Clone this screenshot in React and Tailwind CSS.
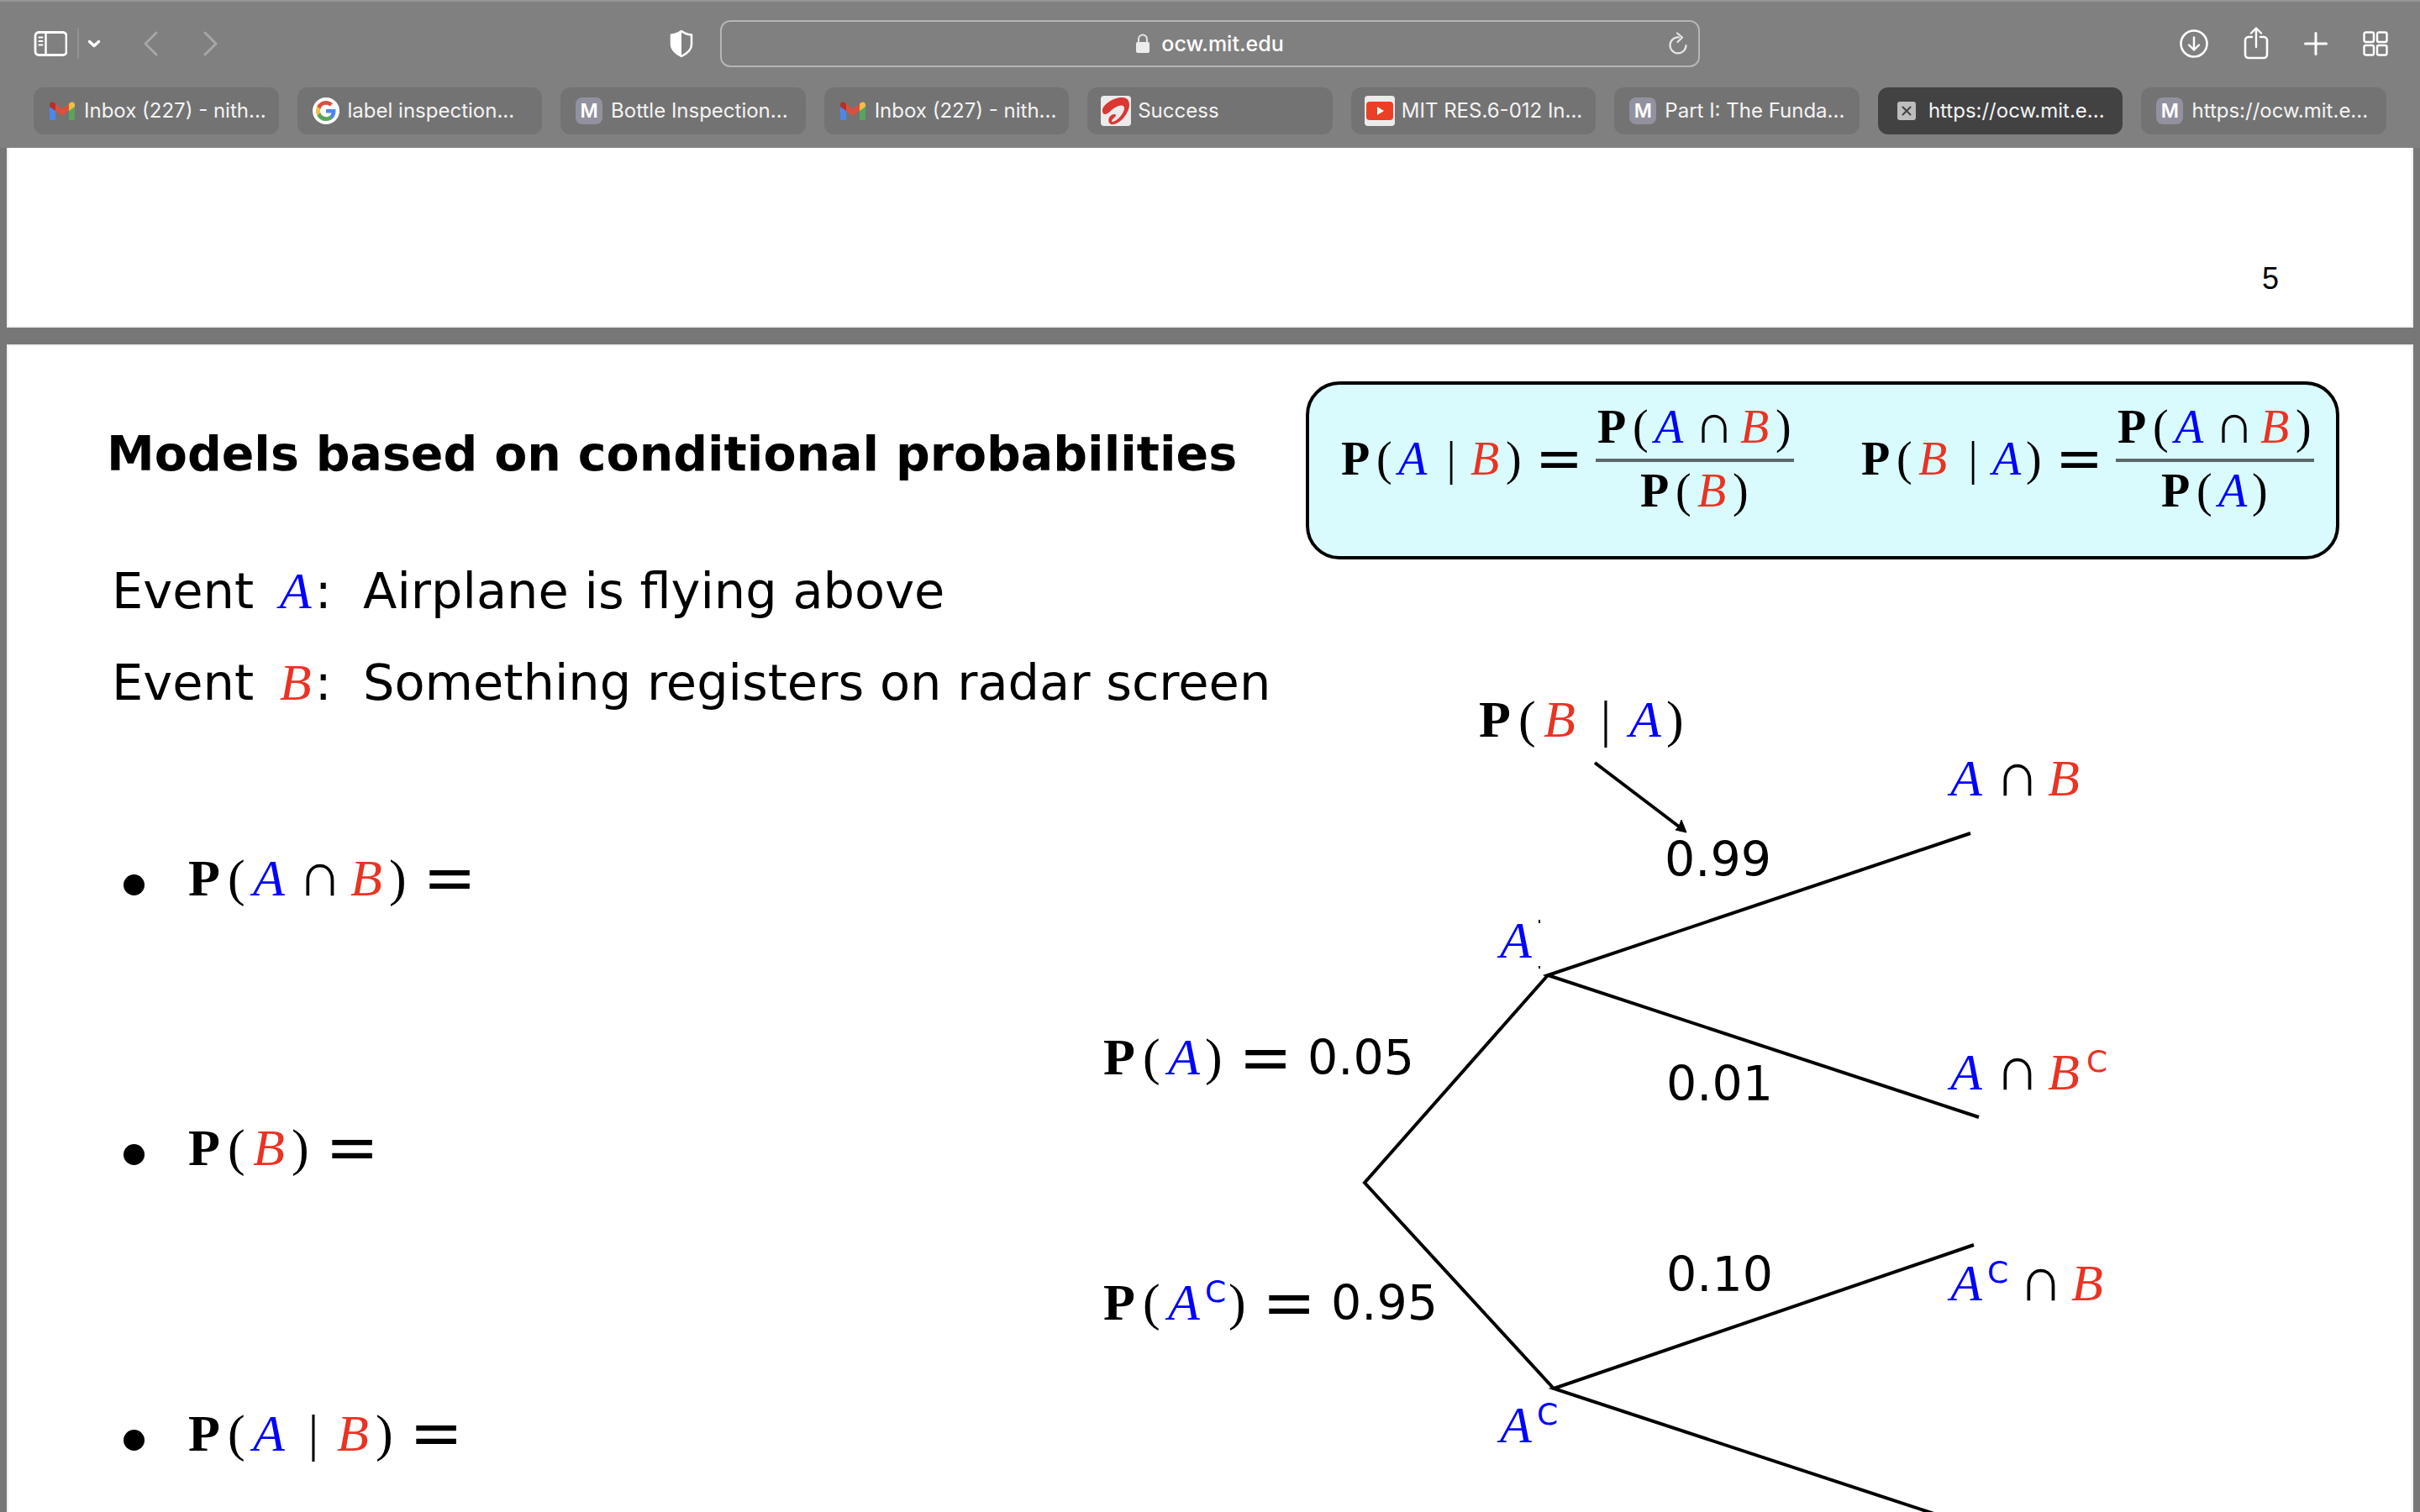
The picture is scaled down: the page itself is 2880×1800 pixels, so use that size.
import React from "react";

/* ---------- favicons ---------- */

function GmailIcon() {
  return (
    <svg viewBox="0 0 30 22" className="h-[22px] w-[30px]" aria-hidden="true">
      <path d="M0 5v15a2 2 0 0 0 2 2h5V9z" fill="#4f86ec" />
      <path d="M30 5v15a2 2 0 0 1-2 2h-5V9z" fill="#58a55c" />
      <path d="M23 2.500 25 1a3.200 3.200 0 0 1 5 2.600V6l-7 5z" fill="#f1bf42" />
      <path d="M7 11V2.500l8 6 8-6V11l-8 6z" fill="#d95040" />
      <path d="M0 6V3.600A3.200 3.200 0 0 1 5 1l2 1.500V11z" fill="#b33126" />
    </svg>
  );
}

function GoogleIcon() {
  return (
    <svg viewBox="0 0 32 32" className="size-8" aria-hidden="true">
      <circle cx="16" cy="16" r="16" fill="#fff" />
      <g transform="translate(4 4)">
        <path d="M23.500 12.300c0-.8-.1-1.600-.2-2.300H12v4.500h6.500a5.500 5.500 0 0 1-2.400 3.600v3h3.900c2.200-2 3.500-5.100 3.500-8.800z" fill="#4f86ec" />
        <path d="M12 24c3.200 0 6-1.100 8-2.900l-3.900-3a7.200 7.200 0 0 1-10.800-3.800h-4v3.100A12 12 0 0 0 12 24z" fill="#58a55c" />
        <path d="M5.300 14.300a7.200 7.200 0 0 1 0-4.600V6.600h-4a12 12 0 0 0 0 10.800z" fill="#f1bf42" />
        <path d="M12 4.800c1.800 0 3.300.6 4.600 1.800L20 3.200A12 12 0 0 0 1.300 6.600l4 3.100A7.100 7.100 0 0 1 12 4.800z" fill="#d95040" />
      </g>
    </svg>
  );
}

function LetterIcon() {
  return (
    <span className="flex size-8 items-center justify-center rounded-lg bg-[#9291a0] text-[23px] leading-none font-semibold text-white">
      M
    </span>
  );
}

function AirtelIcon() {
  return (
    <svg viewBox="0 0 36 36" className="size-9" aria-hidden="true">
      <rect width="36" height="36" rx="4" fill="#ebebeb" />
      <path
        d="M2 18C1 12 14 2 25 2c7 0 9 4 9 9 0 9-10 22-19 23-5 1-7-4-5-8 2-4 7-5 8-3 0 3-4 3-5 8 7 0 15-11 15-16 0-4-4-5-11-1-5 3-8 8-12 8-2 0-3-2-3-4z"
        fill="#da3832"
      />
    </svg>
  );
}

function YouTubeIcon() {
  return (
    <svg viewBox="0 0 36 36" className="size-9" aria-hidden="true">
      <rect width="36" height="36" rx="4" fill="#ebebeb" />
      <rect x="2" y="7" width="32" height="22" rx="4" fill="#eb4026" />
      <path d="M15 13v10l8-5z" fill="#fff" />
    </svg>
  );
}

function CloseIcon() {
  return (
    <svg viewBox="0 0 22 22" className="size-[22px]" aria-hidden="true">
      <rect width="22" height="22" rx="3" fill="#bdbdbd" />
      <path d="M6.500 6.500l9 9m0-9l-9 9" stroke="#424242" strokeWidth="2" strokeLinecap="round" />
    </svg>
  );
}

/* ---------- toolbar icons ---------- */

function Stroke({ w, h, className, children }) {
  return (
    <svg
      viewBox={`0 0 ${w} ${h}`}
      width={w}
      height={h}
      className={className}
      fill="none"
      stroke="currentColor"
      strokeLinecap="round"
      strokeLinejoin="round"
      aria-hidden="true"
    >
      {children}
    </svg>
  );
}

const tabs = [
  { icon: <GmailIcon />, title: "Inbox (227) - nith..." },
  { icon: <GoogleIcon />, title: "label inspection..." },
  { icon: <LetterIcon />, title: "Bottle Inspection..." },
  { icon: <GmailIcon />, title: "Inbox (227) - nith..." },
  { icon: <AirtelIcon />, title: "Success" },
  { icon: <YouTubeIcon />, title: "MIT RES.6-012 In..." },
  { icon: <LetterIcon />, title: "Part I: The Funda..." },
  { icon: <CloseIcon />, title: "https://ocw.mit.e...", active: true },
  { icon: <LetterIcon />, title: "https://ocw.mit.e..." },
];

function Toolbar() {
  return (
    <div className="grid h-14 grid-cols-[1fr_minmax(0,1166px)_1fr] items-center text-white">
      <div className="flex items-center pr-8 pl-10">
        <button aria-label="Show sidebar" className="flex">
          <Stroke w={40} h={30}>
            <rect x="2" y="1.500" width="37" height="27" rx="4" strokeWidth="2.800" />
            <path d="M14.500 2v26" strokeWidth="2.500" />
            <path d="M6.500 7.500h4M6.500 12h4M6.500 16.500h4" strokeWidth="2" />
          </Stroke>
        </button>
        <span className="ml-3 h-9 w-[2px] bg-[#939393]" />
        <button aria-label="Tab groups" className="ml-2.5 flex">
          <Stroke w={16} h={12}>
            <path d="M2.500 3.500 8 8.500l5.500-5" strokeWidth="3.500" />
          </Stroke>
        </button>
        <button aria-label="Back" className="ml-[49px] flex text-[#a6a6a6]">
          <Stroke w={20} h={30}>
            <path d="M17 2 4 15l13 13" strokeWidth="3" />
          </Stroke>
        </button>
        <button aria-label="Forward" className="ml-[52px] flex text-[#a6a6a6]">
          <Stroke w={20} h={30}>
            <path d="M3 2l13 13L3 28" strokeWidth="3" />
          </Stroke>
        </button>
        <button aria-label="Privacy report" className="ml-auto flex">
          <Stroke w={28} h={34}>
            <path
              d="M14 2c3 2.500 7 4 12 4.500V18c0 7-6 11-12 14C8 29 2 25 2 18V6.500C7 6 11 4.500 14 2z"
              strokeWidth="2.500"
            />
            <path d="M14 2v30C8 29 2 25 2 18V6.500C7 6 11 4.500 14 2z" fill="currentColor" stroke="none" />
          </Stroke>
        </button>
      </div>

      <div className="flex h-14 items-center rounded-xl border-2 border-[#b5b5b5] px-3">
        <span className="flex-1" />
        <svg viewBox="0 0 16 24" className="mr-3.5 h-6 w-4" aria-hidden="true">
          <rect y="10" width="16" height="13" rx="2" fill="#ececec" />
          <path d="M3 11V6.500a5 5 0 0 1 10 0V11" fill="none" stroke="#e4e4e4" strokeWidth="2" />
        </svg>
        <input
          aria-label="Address"
          defaultValue="ocw.mit.edu"
          className="field-sizing-content bg-transparent text-center text-[25px] leading-8 font-medium text-white outline-none"
        />
        <span className="flex flex-1 justify-end">
          <button aria-label="Reload" className="flex text-[#e6e6e6]">
            <Stroke w={24} h={28}>
              <path d="M13 6.500A9.500 9.500 0 1 0 21.500 16" strokeWidth="2.200" />
              <path d="M11 1.500l6 5-5.500 5.500" strokeWidth="2.200" />
            </Stroke>
          </button>
        </span>
      </div>

      <div className="flex items-center justify-end gap-[42px] pr-[38px]">
        <button aria-label="Downloads" className="flex">
          <Stroke w={34} h={34}>
            <circle cx="17" cy="17" r="15.500" strokeWidth="2.600" />
            <path d="M17 9.500v15M11 18.500l6 6 6-6" strokeWidth="2.400" />
          </Stroke>
        </button>
        <button aria-label="Share" className="flex">
          <Stroke w={30} h={40}>
            <path d="M10 12H6a4 4 0 0 0-4 4v17a4 4 0 0 0 4 4h18a4 4 0 0 0 4-4V16a4 4 0 0 0-4-4h-4" strokeWidth="2.600" />
            <path d="M15 24V2M9 7.500 15 1.500l6 6" strokeWidth="2.400" />
          </Stroke>
        </button>
        <button aria-label="New tab" className="flex">
          <Stroke w={28} h={28}>
            <path d="M14 1.500v25M1.500 14h25" strokeWidth="3" />
          </Stroke>
        </button>
        <button aria-label="Tab overview" className="flex">
          <Stroke w={30} h={30}>
            <rect x="1.500" y="1.500" width="11.500" height="11.500" rx="2" strokeWidth="2.400" />
            <rect x="17" y="1.500" width="11.500" height="11.500" rx="2" strokeWidth="2.400" />
            <rect x="1.500" y="17" width="11.500" height="11.500" rx="2" strokeWidth="2.400" />
            <rect x="17" y="17" width="11.500" height="11.500" rx="2" strokeWidth="2.400" />
          </Stroke>
        </button>
      </div>
    </div>
  );
}

function TabStrip() {
  return (
    <div role="tablist" className="mt-6 grid grid-cols-9 gap-[22px] px-10">
      {tabs.map((tab, i) => (
        <button
          key={i}
          role="tab"
          aria-selected={Boolean(tab.active)}
          className={
            "flex h-14 min-w-0 items-center gap-2 overflow-hidden rounded-xl px-4 text-[24px] leading-8 whitespace-nowrap text-[#f4f4f4] " +
            (tab.active ? "bg-[#424242]" : "bg-[#737373]")
          }
        >
          <span className="flex w-9 shrink-0 justify-center">{tab.icon}</span>
          {tab.title}
        </button>
      ))}
    </div>
  );
}

/* ---------- math typesetting ---------- */

const SERIF = "font-['Liberation_Serif',serif]";
const SANS = "font-['DejaVu_Sans',sans-serif]";

const sizes = {
  lg: {
    root: "text-[62px] leading-[64px]",
    P: "w-[47px]",
    open: "w-[30px]",
    A: "w-[44px]",
    B: "w-[46px]",
    cap: "w-[72px] text-[74px] leading-[48px]",
    bar: "w-[56px]",
    close: "w-[22px]",
    eq: "w-[100px] text-[76px] leading-[48px]",
  },
  md: {
    root: "text-[56px] leading-[56px]",
    P: "w-[42px]",
    open: "w-[26px]",
    A: "w-[40px]",
    B: "w-[42px]",
    cap: "w-[62px] text-[66px] leading-[40px]",
    bar: "w-[46px]",
    close: "w-[20px]",
    eq: "w-[87px] text-[68px] leading-[40px]",
  },
};

function Token({ t, s }) {
  switch (t) {
    case "P":
      return <span className={`${s.P} font-bold`}>P</span>;
    case "(":
      return <span className={s.open}>(</span>;
    case ")":
      return <span className={s.close}>)</span>;
    case "A":
      return <span className={`${s.A} text-[#0000ff] italic`}>A</span>;
    case "B":
      return <span className={`${s.B} text-[#ea3323] italic`}>B</span>;
    case "A^":
      return (
        <>
          <span className={`${s.A} text-[#0000ff] italic`}>A</span>
          <sup className={`${SANS} top-0 w-[28px] self-start text-[36px] leading-[40px] text-[#0000ff]`}>C</sup>
        </>
      );
    case "B^":
      return (
        <>
          <span className={`${s.B} text-[#ea3323] italic`}>B</span>
          <sup className={`${SANS} top-0 w-[28px] self-start text-[36px] leading-[40px] text-[#ea3323]`}>C</sup>
        </>
      );
    case "∩":
      return <span className={`${s.cap} text-center`}>∩</span>;
    case "|":
      return <span className={`${s.bar} text-center`}>|</span>;
    case "=":
      return <span className={`${SANS} ${s.eq} self-center text-center`}>=</span>;
    default:
      return <span className={`${SANS} text-[57px]`}>{t}</span>;
  }
}

function Formula({ children, size = "lg" }) {
  const s = sizes[size];
  return (
    <span className={`${SERIF} ${s.root} inline-flex items-baseline whitespace-nowrap text-black`}>
      {children.split(" ").map((t, i) => (
        <Token key={i} t={t} s={s} />
      ))}
    </span>
  );
}

function Fraction({ top, bottom }) {
  return (
    <span className="inline-flex w-[236px] flex-col items-center">
      <Formula size="md">{top}</Formula>
      <span className="mt-2.5 mb-[6px] h-1 w-full bg-[#5b696a]" />
      <Formula size="md">{bottom}</Formula>
    </span>
  );
}

function Definition({ left, top, bottom }) {
  return (
    <div className="flex items-start">
      <span className="mt-[38px] flex">
        <Formula size="md">{left}</Formula>
      </span>
      <Fraction top={top} bottom={bottom} />
    </div>
  );
}

/* ---------- probability tree ---------- */

const labels = [
  { text: "P ( B | A )", at: "left-[452px] top-[124px]" },
  { text: "A ∩ B", at: "left-[1013px] top-[194px]" },
  { text: "A", at: "left-[477px] top-[387px]" },
  { text: "A ∩ B^", at: "left-[1013px] top-[544px]" },
  { text: "P ( A ) = 0.05", at: "left-[5px] top-[526px]" },
  { text: "P ( A^ ) = 0.95", at: "left-[5px] top-[818px]" },
  { text: "A^ ∩ B", at: "left-[1013px] top-[795px]" },
  { text: "A^", at: "left-[477px] top-[964px]" },
  { text: "0.99", at: "left-[673px] top-[291px]" },
  { text: "0.01", at: "left-[675px] top-[558px]" },
  { text: "0.10", at: "left-[675px] top-[785px]" },
];

function Tree() {
  return (
    <figure className="relative mt-[34px] h-[1110px]" aria-label="Probability tree">
      <svg className="absolute inset-0 h-full w-full overflow-visible" fill="none" stroke="#000" aria-hidden="true">
        <path d="M534 461 316 708l225 245" strokeWidth="4" />
        <path d="M1037 292 534 461l513 169" strokeWidth="4" />
        <path d="M1041 782 541 953l480 158" strokeWidth="4" />
        <path d="M590 208l104 79" strokeWidth="4" />
        <path d="M699 291l-13-3 4-4 3-8z" fill="#000" strokeWidth="1" />
        <path d="M524 395v4M524 450v3" strokeWidth="2" />
      </svg>
      {labels.map((l) => (
        <span key={l.text} className={`absolute flex ${l.at}`}>
          <Formula>{l.text}</Formula>
        </span>
      ))}
    </figure>
  );
}

function Slide() {
  return (
    <article className="mx-2 mt-5 flex flex-1 border-2 border-[#f0f0f0] bg-white text-black">
      <div className={`${SANS} w-[1298px] shrink-0 pt-[96px] pl-[117px] text-[59px] leading-[64px] whitespace-nowrap`}>
        <h1 className="text-[57px] font-bold">Models based on conditional probabilities</h1>
        <p className="mt-[100px] pl-1.5">
          Event <i className={`${SERIF} mr-1 ml-3 text-[62px] leading-[48px] text-[#0000ff]`}>A</i>:&nbsp; Airplane is flying above
        </p>
        <p className="mt-[45px] pl-1.5">
          Event <i className={`${SERIF} mr-1 ml-3 text-[62px] leading-[48px] text-[#ea3323]`}>B</i>:&nbsp; Something registers on radar screen
        </p>
        <ul className="mt-[168px] pl-5">
          <li className="flex items-baseline gap-[52px]">
            <span className="mb-1 size-[25px] rounded-full bg-black" />
            <Formula>P ( A ∩ B ) =</Formula>
          </li>
          <li className="mt-[257px] flex items-baseline gap-[52px]">
            <span className="mb-1 size-[25px] rounded-full bg-black" />
            <Formula>P ( B ) =</Formula>
          </li>
          <li className="mt-[276px] flex items-baseline gap-[52px]">
            <span className="mb-1 size-[25px] rounded-full bg-black" />
            <Formula>P ( A | B ) =</Formula>
          </li>
        </ul>
      </div>
      <div className="min-w-0 flex-1">
        <div className="mt-[42px] mr-[86px] ml-auto flex h-[212px] w-[1230px] justify-between rounded-[40px] border-4 border-black bg-[#d9fbfe] pt-[22px] pr-[26px] pl-[38px]">
          <Definition left="P ( A | B ) =" top="P ( A ∩ B )" bottom="P ( B )" />
          <Definition left="P ( B | A ) =" top="P ( A ∩ B )" bottom="P ( A )" />
        </div>
        <Tree />
      </div>
    </article>
  );
}

export default function App() {
  return (
    <div className="flex h-screen flex-col overflow-hidden bg-[#777777] font-['Inter',sans-serif]">
      <header className="h-44 shrink-0 border-t-2 border-[#969696] bg-[#808080] pt-[22px]">
        <Toolbar />
        <TabStrip />
      </header>
      <main className="flex min-h-0 flex-1 flex-col">
        <section className="mx-2 flex h-[214px] shrink-0 items-end justify-end border-2 border-t-0 border-[#f0f0f0] bg-white pr-[158px] pb-9 font-['Liberation_Sans',sans-serif] text-4xl text-black">
          5
        </section>
        <Slide />
      </main>
    </div>
  );
}
